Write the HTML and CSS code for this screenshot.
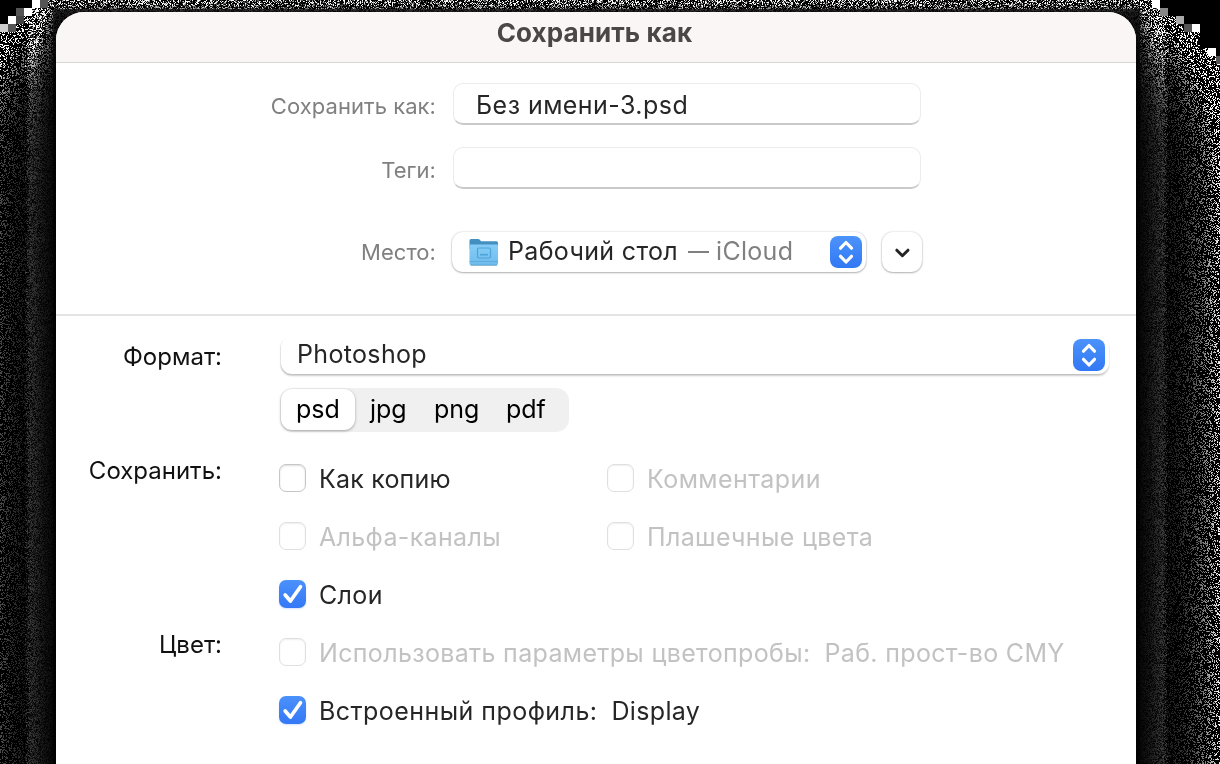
FILE: index.html
```html
<!DOCTYPE html>
<html lang="ru">
<head>
<meta charset="utf-8">
<title>Сохранить как</title>
<link rel="stylesheet" href="styles.css">
</head>
<body>
<canvas class="grain" id="grain" width="1220" height="764"></canvas>
<main class="dialog">
  <header class="titlebar"><span class="t-title">Сохранить как</span></header>
  <section class="target">
    <div class="row row-name"><label class="label t-name">Сохранить как:</label><div class="field"><span class="t-file">Без имени-3.psd</span></div></div>
    <div class="row row-tags"><label class="label t-tags">Теги:</label><div class="field"></div></div>
    <div class="row row-place"><label class="label t-place">Место:</label>
      <div class="popup place">
        <svg class="folder" width="32" height="30" viewBox="0 0 32 30">
          <defs><linearGradient id="f" x1="0" y1="0" x2="0" y2="1"><stop offset="0" stop-color="#86cdf8"/><stop offset="1" stop-color="#6dbcec"/></linearGradient></defs>
          <path d="M1.500 3.500Q1.500 2 3 2H10q1.300 0 2 1l1 1.200h15.500q1.500 0 1.500 1.500V12H1.500z" fill="#438fc0"/>
          <path d="M1.500 8.500Q1.500 7.500 2.500 7.500H29q1 0 1 1V26.500q0 1.500-1.500 1.500H3q-1.500 0-1.500-1.500z" fill="url(#f)"/>
          <path d="M1.500 24.500H30" stroke="#5eabdc"/><path d="M2.500 28.300H29" stroke="#4a92bd" stroke-width=".8"/>
          <rect x="9.500" y="11" width="13" height="10" rx="1.500" fill="none" stroke="#4ea3d8" stroke-width="1.200"/>
          <path d="M12 17.700h8" stroke="#4ea3d8" stroke-width="1.600"/>
        </svg>
        <span class="t-desk">Рабочий стол</span><span class="t-cloud"><span class="dash">—</span> iCloud</span>
        <span class="stepper"><svg width="32" height="32" viewBox="0 0 32 32"><path d="M10.500 12.200 16 6.500l5.500 5.700M10.500 20.300 16 26l5.500-5.700"/></svg></span>
      </div>
      <button class="expand"><svg width="42" height="42" viewBox="0 0 42 42"><path d="m14.800 18.200 5.600 5.500 5.600-5.500"/></svg></button>
    </div>
  </section>
  <section class="options">
    <div class="group group-format"><div class="caption t-format">Формат:</div>
      <div class="format">
        <div class="popup type"><span class="t-type">Photoshop</span><span class="stepper"><svg width="32" height="32" viewBox="0 0 32 32"><path d="M10.500 12.200 16 6.500l5.500 5.700M10.500 20.300 16 26l5.500-5.700"/></svg></span></div>
        <div class="segments"><span class="seg on">psd</span><span class="seg s-jpg">jpg</span><span class="seg s-png">png</span><span class="seg s-pdf">pdf</span></div>
      </div>
    </div>
    <div class="group"><div class="caption cap-save t-save">Сохранить:</div>
      <div class="checks">
        <div class="check"><i class="box"></i><span class="t-copy">Как копию</span></div>
        <div class="check off"><i class="box"></i><span class="t-comm">Комментарии</span></div>
        <div class="check off"><i class="box"></i><span class="t-alpha">Альфа-каналы</span></div>
        <div class="check off"><i class="box"></i><span class="t-spot">Плашечные цвета</span></div>
        <div class="check"><i class="box ticked"><svg width="28" height="28" viewBox="0 0 28 28"><path d="m6.200 15 5.200 6L21.500 6.800"/></svg></i><span class="t-layers">Слои</span></div>
      </div>
    </div>
    <div class="group"><div class="caption cap-color t-color">Цвет:</div>
      <div class="checks single">
        <div class="check off"><i class="box"></i><span class="t-proof">Использовать параметры цветопробы:</span><span class="t-cmy">Раб. прост-во CMY</span></div>
        <div class="check"><i class="box ticked"><svg width="28" height="28" viewBox="0 0 28 28"><path d="m6.200 15 5.200 6L21.500 6.800"/></svg></i><span class="t-prof">Встроенный профиль:</span><span class="t-disp">Display</span></div>
      </div>
    </div>
  </section>
</main>
<script src="script.js"></script>
</body>
</html>
```
FILE: styles.css
```css
* { box-sizing: border-box; }
body { margin: 0; width: 1220px; height: 764px; overflow: hidden; background: #000; color: #262626; font: 430 25px/30px Inter, Roboto, "Liberation Sans", sans-serif; letter-spacing: .34px; }
.grain { position: absolute; left: 0; top: 0; }
span, label, .caption { white-space: nowrap; }
.dialog { position: relative; width: 1080px; height: 752px; margin: 12px 0 0 56px; background: #fff; border-radius: 28px 28px 0 0; overflow: hidden; }
.titlebar { height: 51px; background: #faf6f5; border-bottom: 1px solid #d8d5d3; display: flex; justify-content: center; padding: 6px 3px 0 0; font-weight: 700; font-size: 26px; letter-spacing: .1px; color: #4b4747; }
.target { height: 253px; border-bottom: 2px solid #e4e4e4; padding-top: 20px; }
.row { display: flex; align-items: center; height: 42px; }
.row-tags { margin-top: 22px; }
.row-place { margin-top: 42px; }
.label { width: 380px; margin-right: 17px; text-align: right; color: #808080; font-size: 22px; font-weight: 400; letter-spacing: .05px; padding-top: 4px; }
.t-place { padding-top: 0; }
.field { width: 468px; height: 42px; border: 1px solid #ececec; border-bottom: 2px solid #c9c9c9; border-radius: 10px; padding: 6px 22px; }
.t-file { letter-spacing: .45px; }
.popup { display: flex; align-items: center; background: #fff; border-radius: 11px; box-shadow: 0 0 2px #0003, 0 1px 2px #0004; }
.place { width: 414px; height: 40px; margin-left: -1px; padding: 0 4px 0 16px; }
.folder { margin-right: 8px; }
.t-cloud { display: flex; gap: 8px; margin-left: 10px; color: #808080; font-weight: 400; letter-spacing: .3px; }
.t-cloud .dash { width: 20px; transform: scaleX(.84); transform-origin: left; }
.place .t-cloud .dash { margin-top: 0; }
.place span:not(.stepper) { margin-top: -2px; }
.stepper { width: 32px; height: 32px; margin-left: auto; border-radius: 8px; background: linear-gradient(#4c93fb, #3178f4); }
.stepper svg, .box svg { display: block; fill: none; stroke: #fff; stroke-width: 3.2; stroke-linecap: round; stroke-linejoin: round; }
.box svg { stroke-width: 3.7; }
.expand { width: 40px; height: 40px; margin-left: 16px; padding: 0; border: 0; border-radius: 11px; background: #fff; box-shadow: 0 0 2px #0003, 0 1px 2px #0004; }
.expand svg { display: block; fill: none; stroke: #242424; stroke-width: 3; stroke-linecap: round; stroke-linejoin: round; }
.group { display: flex; }
.group-format { padding-top: 20px; }
.caption { width: 166px; margin-right: 57px; text-align: right; color: #111; font-size: 24px; letter-spacing: 0; padding-top: 6px; flex: none; }
.format { padding-left: 1px; }
.type { width: 828px; height: 38px; margin-left: 1px; padding: 0 4px 0 16px; box-shadow: -1px 1px 1px #0001, 0 2px 2px #0003; }
.type .t-type { margin-top: -2px; }
.segments { display: flex; width: 289px; height: 44px; margin-top: 14px; padding: 1px 0; border-radius: 13px; background: #f0f0f0; color: #000; letter-spacing: 0; }
.seg { height: 41px; padding: 5px 0 0 16px; line-height: 30px; }
.seg.on { width: 74px; margin-left: 1px; background: #fff; border-radius: 11px; padding-left: 15px; box-shadow: 0 1px 3px #0005; }
.s-jpg { padding-left: 15px; width: 63px; }
.s-png { width: 72px; }
.checks { display: grid; grid-template-columns: 328px 500px; grid-auto-rows: 58px; padding-top: 17px; }
.single { grid-template-columns: 830px; padding-top: 0; }
.check { display: flex; align-items: center; height: 58px; }
.check span { margin-top: 2px; }
.box { flex: none; width: 27px; height: 28px; margin-right: 13px; border: 1px solid #c6c6c6; border-radius: 7px; box-shadow: inset 0 1px 2px #0002; }
.off { color: #c2c2c2; }
.off .box { border-color: #dfdfdf; box-shadow: inset 0 1px 2px #0001; }
.ticked { border: 0; background: linear-gradient(#4b91fb, #3478f6); box-shadow: 0 1px 2px #3478f633; }
.cap-save { padding-top: 24px; }
.cap-color { padding-top: 7px; }
.t-copy { letter-spacing: .2px; }
.t-comm { letter-spacing: .42px; }
.t-prof { letter-spacing: .45px; }
.t-cmy, .t-disp { margin-left: 14px; }
```
FILE: script.js
```js
const ctx = document.getElementById('grain').getContext('2d');
const W = 1220, H = 764, img = ctx.createImageData(W, H);
let seed = 91;
const rnd = () => {
  seed = (seed * 1664525 + 1013904223) >>> 0;
  return seed / 4294967296;
};
// Dithered glow: sparse bright grains far out, dense dark grains by the dialog.
const falloff = x => 1 / (1 + Math.exp(1.702 * x));
for (let y = 0; y < H; y++) {
  for (let x = 0; x < W; x++) {
    const d = Math.max(56 - x, x - 1136, 0);
    const a = Math.max(1, 58 * falloff(d / 37) * falloff((90 - y) / 50));
    const dist = Math.hypot(d, Math.max(0, 12 - y));
    const near = Math.max(0, Math.min(1, (32 - dist) / 6));
    let v;
    if (near > rnd()) {
      v = rnd() * Math.min(3.4, 0.8 + dist / 8) * 255 / a;
      if (dist < 4) v *= 0.35;
      else if (rnd() < 0.5 - y / 260) v = 0;
    } else {
      v = rnd() < 0.3 ? (1 + rnd() * 0.4) * 255 / a : 0;
    }
    v = Math.min(255, v);
    const i = (y * W + x) * 4;
    img.data[i] = img.data[i + 1] = img.data[i + 2] = v;
    img.data[i + 3] = 255;
  }
}
ctx.putImageData(img, 0, 0);
const cell = (x, y, w, h, c) => { ctx.fillStyle = c; ctx.fillRect(x, y, w, h); };
[[0, 32], [8, 24], [16, 16], [24, 8]].forEach(([y, w]) => cell(0, y, w, 8, '#000'));
[[0, 1160], [8, 1168], [16, 1184], [24, 1200], [32, 1200], [40, 1200], [48, 1216]].forEach(([y, x]) => cell(x, y, W - x, 8, '#000'));
[[32, 0], [24, 8], [8, 16], [1152, 0], [1192, 24], [1208, 48]].forEach(([x, y]) => cell(x, y, 8, 8, '#fff'));
[[40, 0, '#555'], [16, 8, '#555'], [16, 16, '#444'], [8, 24, '#555'], [0, 24, '#ccc'], [1160, 8, '#888'], [1176, 16, '#aaa'], [1184, 24, '#555'], [1216, 56, '#555']].forEach(([x, y, c]) => cell(x, y, 8, 8, c));
```
